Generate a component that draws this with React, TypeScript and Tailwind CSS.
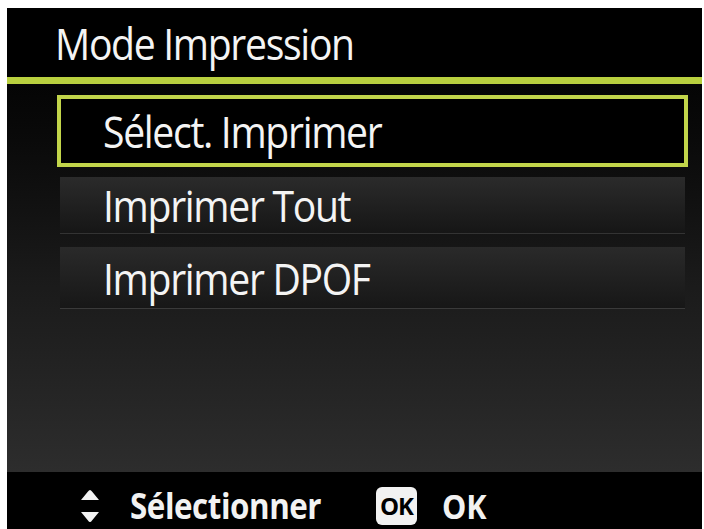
const font = { fontFamily: '"Open Sans", "Noto Sans", sans-serif' };

function UpDownIcon() {
  return (
    <svg width="20" height="34" viewBox="0 0 20 34" className="shrink-0">
      <path d="M10 1 Q11 1 12 2.5 L19 11 L1 11 L8 2.5 Q9 1 10 1 Z" fill="#f2f2f2" />
      <path d="M1 23 L19 23 L12 31.5 Q11 33 10 33 Q9 33 8 31.5 Z" fill="#f2f2f2" />
    </svg>
  );
}

// condensed look: the camera font is narrow, so squeeze Open Sans horizontally
const label = "text-[44px] text-[#f4f4f4] tracking-[-1.5px] leading-none origin-left scale-x-[0.89] whitespace-nowrap";

export default function App() {
  return (
    <div className="w-[704px] h-[529px] bg-white pt-[8px] pl-[7px] pr-[2px] overflow-hidden" style={font}>
      <div className="h-full flex flex-col bg-black">
        {/* Title */}
        <div className="h-[69px] flex items-center pl-[48px]">
          <span className={label}>Mode Impression</span>
        </div>
        <div className="h-[7px] bg-[#b9d03f]" />

        {/* Menu list */}
        <div className="flex-1 flex flex-col pt-[11px] pl-[50px] pr-[14px] bg-gradient-to-b from-[#050505] via-[#1a1a1a] to-[#2d2d2d]">
          <div className="h-[72px] border-[4px] border-[#c2d54a] bg-black flex items-center pl-[42px]">
            <span className={label}>Sélect. Imprimer</span>
          </div>
          <div className="mt-[10px] mx-[3px] h-[57px] flex items-center pl-[43px] bg-gradient-to-b from-[#2b2b2b] to-[#161616] border-b border-[#333]">
            <span className={label}>Imprimer Tout</span>
          </div>
          <div className="mt-[13px] mx-[3px] h-[62px] flex items-center pl-[43px] bg-gradient-to-b from-[#2a2a2a] to-[#171717] border-b border-[#3a3a3a]">
            <span className={label}>Imprimer DPOF</span>
          </div>
        </div>

        {/* Footer */}
        <div className="h-[57px] bg-black flex items-center pl-[73px] pt-[10px]">
          <UpDownIcon />
          <span className="ml-[30px] w-[190px] text-[36px] font-bold text-[#f2f2f2] tracking-[-0.5px] leading-none origin-left scale-x-[0.87] whitespace-nowrap">
            Sélectionner
          </span>
          <span className="ml-[56px] w-[41px] h-[38px] rounded-[6px] bg-[#f2f2f2] flex items-center justify-center text-[24px] font-bold text-black tracking-[-1px] leading-none">
            OK
          </span>
          <span className="ml-[25px] text-[34px] font-bold text-[#f2f2f2] leading-none origin-left scale-x-[0.9]">OK</span>
        </div>
      </div>
    </div>
  );
}
